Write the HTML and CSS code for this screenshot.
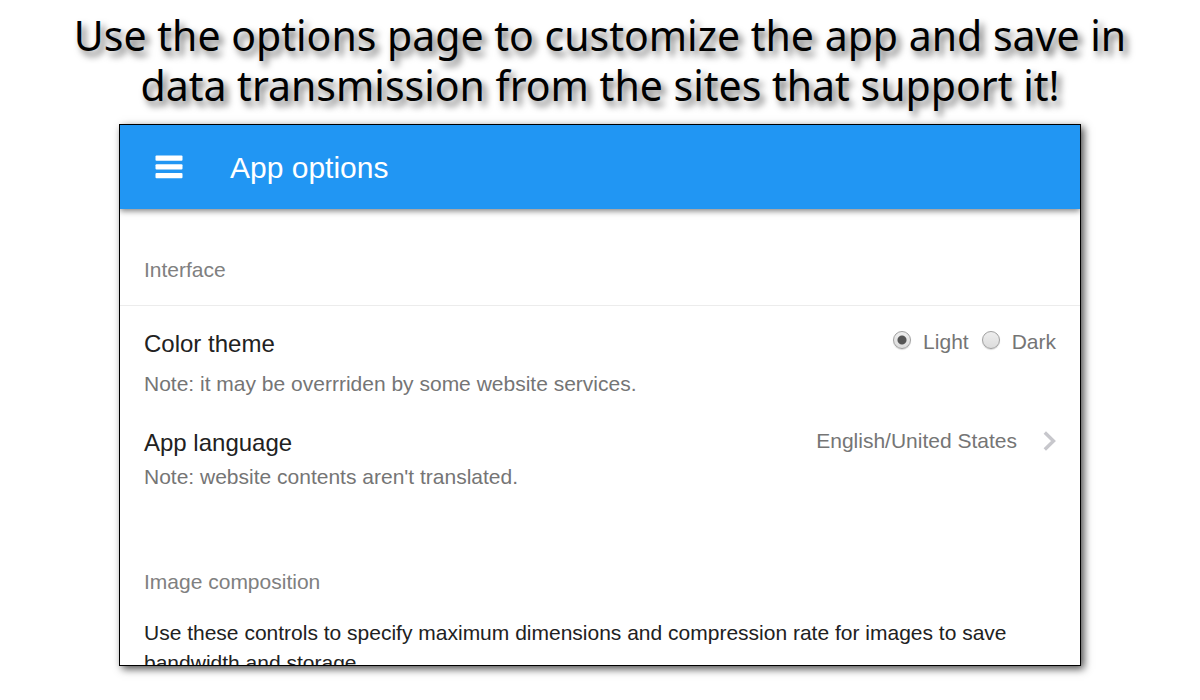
FILE: index.html
```html
<!DOCTYPE html>
<html lang="en">
<head>
<meta charset="utf-8">
<meta name="viewport" content="width=device-width, initial-scale=1">
<title>App options</title>
<link rel="stylesheet" href="styles.css">
</head>
<body class="page">
<h1 class="headline">Use the options page to customize the app and save in<br>data transmission from the sites that support it!</h1>
<main class="app">
  <header class="bar">
    <button class="menu" type="button" aria-label="Menu">
      <svg width="28" height="24" viewBox="0 0 28 24" fill="#fff" aria-hidden="true">
        <rect x="0.5" y="0.5" width="27" height="5.3" rx="1"/>
        <rect x="0.5" y="9.2" width="27" height="5.3" rx="1"/>
        <rect x="0.5" y="18" width="27" height="5.3" rx="1"/>
      </svg>
    </button>
    <h2 class="title">App options</h2>
  </header>
  <h3 class="section section-ruled">Interface</h3>
  <section class="settings">
    <div class="row">
      <div class="text text-spaced">
        <h4 class="name" id="theme">Color theme</h4>
        <p class="note">Note: it may be overrriden by some website services.</p>
      </div>
      <div class="choices" role="radiogroup" aria-labelledby="theme">
        <input class="radio" type="radio" name="theme" id="light" checked><label class="choice" for="light">Light</label>
        <input class="radio" type="radio" name="theme" id="dark"><label class="choice" for="dark">Dark</label>
      </div>
    </div>
    <div class="row">
      <div class="text">
        <h4 class="name">App language</h4>
        <p class="note">Note: website contents aren't translated.</p>
      </div>
      <a class="language" href="#language">English/United States
        <svg width="13" height="20" viewBox="0 0 13 20" fill="none" stroke="#c7c7cc" stroke-width="3.4" aria-hidden="true"><path d="M1.8 1.5L10.5 10L1.8 18.5"/></svg>
      </a>
    </div>
  </section>
  <h3 class="section">Image composition</h3>
  <p class="intro">Use these controls to specify maximum dimensions and compression rate for images to save bandwidth and storage.</p>
</main>
</body>
</html>
```
FILE: styles.css
```css
* { box-sizing: border-box; }

.page {
  display: flex;
  flex-direction: column;
  height: 100vh;
  margin: 0;
  padding: 10px 10% 34px;
  overflow: hidden;
  background: #fff;
  color: #212121;
  font-family: "Liberation Sans", Arial, sans-serif;
}

.headline {
  margin: 0 -80px 14px;
  color: #000;
  font: 400 41px/50px "Noto Sans", "Open Sans", sans-serif;
  text-align: center;
  text-shadow: 4px 5px 7px rgba(0, 0, 0, 0.6);
}

.app {
  flex: 1;
  min-height: 0;
  margin: 0 -1px;
  overflow: hidden;
  border: 1px solid #000;
  background: #fff;
  box-shadow: 3px 3px 8px rgba(0, 0, 0, 0.7);
}

.bar {
  display: flex;
  align-items: center;
  gap: 40px;
  height: 84px;
  padding: 0 28px;
  background: #2196f3;
  box-shadow: 0 2px 6px rgba(0, 0, 0, 0.5);
}

.menu {
  display: flex;
  padding: 7px;
  border: 0;
  background: none;
}

.title {
  margin: 0;
  padding-top: 2px;
  color: #fff;
  font-size: 30px;
  font-weight: 400;
}

.section {
  margin: 0;
  padding: 0 24px;
  color: #808080;
  font-size: 21px;
  font-weight: 400;
  line-height: 24px;
}

.section-ruled {
  padding-top: 49px;
  padding-bottom: 23px;
  border-bottom: 1px solid #ececec;
}

.settings {
  display: flex;
  flex-direction: column;
  gap: 32px;
  padding: 23px 24px 81px;
}

.row {
  display: flex;
  justify-content: space-between;
  align-items: flex-start;
}

.text {
  display: flex;
  flex-direction: column;
  gap: 7px;
}

.text-spaced { gap: 13px; }

.name {
  margin: 0;
  font-size: 24px;
  font-weight: 400;
  line-height: 30px;
}

.note {
  margin: 0;
  color: #757575;
  font-size: 21px;
  line-height: 24px;
}

.choices {
  display: flex;
  align-items: center;
  color: #757575;
  font-size: 21px;
  line-height: 26px;
}

.radio {
  appearance: none;
  width: 18px;
  height: 18px;
  margin: 0 12px 4px 0;
  border: 1px solid #a0a0a0;
  border-radius: 50%;
  background: linear-gradient(#eee, #dcdcdc);
  box-shadow: 0 1px 1px rgba(0, 0, 0, 0.15);
}

.radio:checked {
  background: radial-gradient(circle, #555 0 4px, transparent 5px), linear-gradient(#eee, #dcdcdc);
}

.choice + .radio { margin-left: 13px; }

.language {
  display: flex;
  align-items: center;
  gap: 26px;
  color: #757575;
  font-size: 21px;
  line-height: 26px;
  text-decoration: none;
}

.intro {
  margin: 24px 24px 0;
  font-size: 21px;
  line-height: 30px;
}
```
